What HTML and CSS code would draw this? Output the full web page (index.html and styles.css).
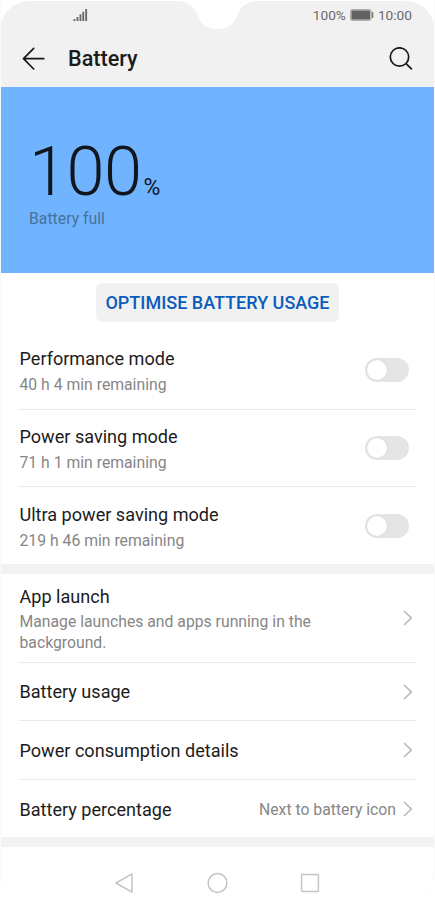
FILE: index.html
```html
<!DOCTYPE html>
<html lang="en">
<head>
<meta charset="utf-8">
<title>Battery</title>
<link rel="stylesheet" href="styles.css">
</head>
<body>
<div class="phone">
  <header class="top">
    <svg class="top-shape" viewBox="0 0 435 87" aria-hidden="true"><path d="M1 87V29C1 12 14 1 31 1H176C188 1 194 6 198 16C202 25 207 29 217.500 29C228 29 233 25 237 16C241 6 247 1 259 1H404C421 1 434 12 434 29V87Z" fill="#f1f1f1"/></svg>
    <div class="status">
      <svg class="signal" width="16" height="14" viewBox="0 0 16 14" fill="#6c6c6c"><path d="M1.500 11h1.900v2H1.500zM4.500 9h1.900v4H4.500zM7.500 6.300h1.900V13H7.500zM10.300 3.800h1.900V13H10.300zM13.200 1h1.900v12H13.200z"/></svg>
      <span class="charge">100%</span>
      <svg class="battery" width="24" height="12" viewBox="0 0 24 12"><rect x=".6" y=".6" width="20.300" height="10.800" rx="1.200" fill="none" stroke="#aaa"/><rect x="1.400" y="1.400" width="18.700" height="9.200" fill="#626262"/><path d="M22.500 3v6" stroke="#777" stroke-width="1.600"/></svg>
      <span class="clock">10:00</span>
    </div>
    <div class="appbar">
      <svg width="24" height="24" viewBox="0 0 24 24" fill="none" stroke="#181818" stroke-width="1.700" stroke-linecap="round" stroke-linejoin="round"><path d="M11.700 1.300L1.500 11.700L11.700 22M1.500 11.700H21.800"/></svg>
      <h1>Battery</h1>
      <svg width="24" height="24" viewBox="0 0 24 24" fill="none" stroke="#181818" stroke-width="1.700"><circle cx="10.500" cy="10" r="9.200"/><path d="M17.100 16.600L22.900 22.400"/></svg>
    </div>
  </header>
  <section class="hero">
    <div class="level"><span class="number">100</span><span class="percent">%</span></div>
    <div class="state">Battery full</div>
  </section>
  <div class="action"><button class="optimise"><span>OPTIMISE BATTERY USAGE</span></button></div>
  <section class="modes">
    <div class="row"><div><div class="title">Performance mode</div><div class="sub">40 h 4 min remaining</div></div><div class="switch"></div></div>
    <div class="row"><div><div class="title">Power saving mode</div><div class="sub">71 h 1 min remaining</div></div><div class="switch"></div></div>
    <div class="row"><div><div class="title">Ultra power saving mode</div><div class="sub">219 h 46 min remaining</div></div><div class="switch"></div></div>
  </section>
  <div class="band"></div>
  <section class="links">
    <div class="row tall"><div><div class="title">App launch</div><div class="sub">Manage launches and apps running in the<br>background.</div></div><svg class="chevron" viewBox="0 0 10 16"><path d="M1 1L8.300 8L1 15"/></svg></div>
    <div class="row"><div class="title">Battery usage</div><svg class="chevron" viewBox="0 0 10 16"><path d="M1 1L8.300 8L1 15"/></svg></div>
    <div class="row"><div class="title">Power consumption details</div><svg class="chevron" viewBox="0 0 10 16"><path d="M1 1L8.300 8L1 15"/></svg></div>
    <div class="row"><div class="title">Battery percentage</div><div class="value">Next to battery icon</div><svg class="chevron" viewBox="0 0 10 16"><path d="M1 1L8.300 8L1 15"/></svg></div>
  </section>
  <div class="band"></div>
  <nav class="nav">
    <svg width="20" height="22" viewBox="0 0 20 22"><path d="M18 1.800V20.200L1.900 11Z"/></svg>
    <svg width="22" height="22" viewBox="0 0 22 22"><circle cx="11.500" cy="11" r="9.400"/></svg>
    <svg width="20" height="20" viewBox="0 0 20 20"><rect x="1.600" y="1.600" width="16.800" height="16.800" rx=".7"/></svg>
  </nav>
</div>
</body>
</html>
```
FILE: styles.css
```css
* { box-sizing: border-box; }
body { margin: 0; background: #fff; font-family: Roboto, sans-serif; color: #1c1c1c; }
.phone { width: 435px; height: 904px; overflow: hidden; display: flex; flex-direction: column; background: #fff; border-right: 1px solid #fafafa; border-left: 1px solid #fafafa; border-radius: 0 0 32px 32px; }
.top { position: relative; height: 87px; flex: none; margin: 0 -1px; }
.top-shape { position: absolute; inset: 0; width: 435px; height: 87px; }
.status { position: relative; height: 30px; display: flex; align-items: center; padding: 0 23px 0 72px; font-size: 13.700px; color: #6a6a6a; }
.charge { margin-left: auto; }
.battery { margin: 0 4px 0 4px; }
.appbar { position: relative; height: 57px; display: flex; align-items: center; padding: 0 22px 0 22px; }
.appbar h1 { flex: 1; margin: 1px 0 0 22px; font-size: 21.600px; line-height: 26px; font-weight: 500; }
.hero { flex: none; height: 186.400px; background: #70b4ff; padding: 55px 28px 0; }
.level { height: 67px; display: flex; align-items: baseline; line-height: 60px; color: #10161c; }
.number { font-size: 68.500px; font-weight: 300; letter-spacing: -.5px; }
.percent { font-size: 23px; line-height: 28px; margin-left: 2px; }
.state { font-size: 15.800px; line-height: 20px; color: #497199; }
.action { flex: none; height: 58.600px; padding-top: 9.600px; display: flex; justify-content: center; align-items: flex-start; }
.optimise { width: 243px; height: 39px; padding: 0; border: 0; border-radius: 6px; background: #f1f1f1; color: #0a5dbd; font: 500 18px/39px Roboto, sans-serif; white-space: nowrap; }
.row { margin: 0 18px; display: flex; align-items: center; border-bottom: 1px solid #e8e8e8; }
.row > :first-child { flex: 1; padding-left: .5px; }
.row:last-child { border-bottom: 0; }
.modes, .links { flex: none; }
.modes .row { height: 77.600px; padding: 1px 7px 0 0; }
.modes { height: 232px; }
.title { font-size: 18.080px; line-height: 26px; white-space: nowrap; }
.sub { font-size: 15.750px; line-height: 21px; margin-top: 2px; color: #868686; white-space: nowrap; }
.switch { width: 44px; height: 24px; margin-bottom: 1px; border-radius: 12px; background: #e5e5e5; padding: 2px; }
.switch::before { content: ""; display: block; width: 20px; height: 20px; border-radius: 50%; background: #fff; box-shadow: 0 0 2px #c8c8c8; }
.band { flex: none; height: 10px; background: #f2f2f2; }
.links { height: 263px; }
.links .row { height: 58.500px; padding-right: 3px; }
.links .row > .title { padding-top: 1px; }
.links .tall { height: 89px; }
.links .tall > div { padding-top: 1px; }
.links .tall .sub { margin-top: 1px; }
.value { font-size: 15.750px; color: #868686; margin-right: 7px; padding-top: 1px; }
.chevron { width: 10px; height: 16px; fill: none; stroke: #b5b5b5; stroke-width: 1.500; }
.nav { height: 57px; display: flex; align-items: center; padding: 15px 114px 0 113px; justify-content: space-between; }
.nav svg { fill: none; stroke: #c4c4c4; stroke-width: 1.500; stroke-linejoin: round; }
```
